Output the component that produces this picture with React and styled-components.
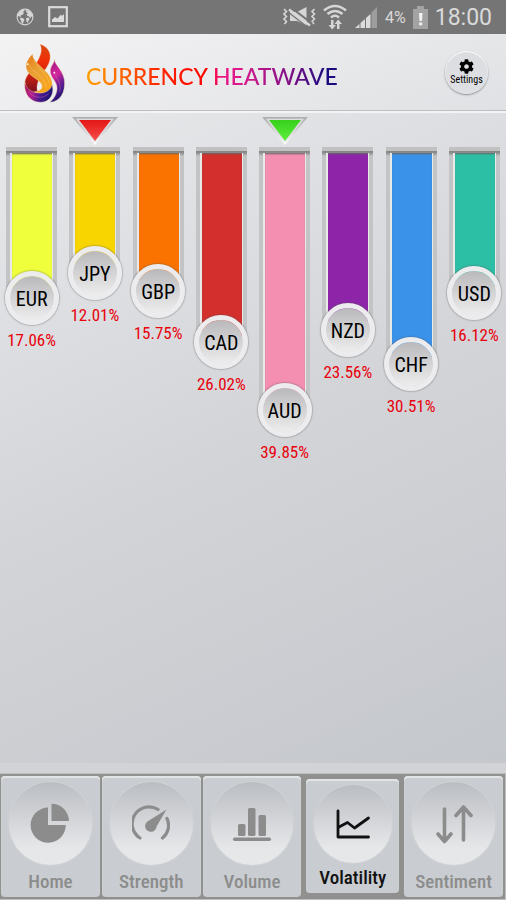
import styled, { createGlobalStyle } from "styled-components";
import { FaCog } from "react-icons/fa";

const PAIRS = [
  { code: "EUR", value: 17.06, color: "#efff3c" },
  { code: "JPY", value: 12.01, color: "#f9d500", marker: "low" },
  { code: "GBP", value: 15.75, color: "#fa7300" },
  { code: "CAD", value: 26.02, color: "#d32f2d" },
  { code: "AUD", value: 39.85, color: "#f48fb1", marker: "high" },
  { code: "NZD", value: 23.56, color: "#8e24a8" },
  { code: "CHF", value: 30.51, color: "#3a92e9" },
  { code: "USD", value: 16.12, color: "#2dbfa6" },
];

const TABS = [
  { name: "Home", Icon: PieIcon },
  { name: "Strength", Icon: GaugeIcon },
  { name: "Volume", Icon: BarsIcon },
  { name: "Volatility", Icon: LineIcon, active: true },
  { name: "Sentiment", Icon: ArrowsIcon },
];

const barHeight = (value) => Math.round(67 + value * 4.92);

const App = () => {
  return (
    <>
      <GlobalStyle />
      <Screen>
        <StatusBar>
          <StatusGroup $gap="14px">
            <GlobeIcon />
            <PhotoIcon />
          </StatusGroup>
          <StatusGroup $gap="7px">
            <MuteIcon />
            <WifiIcon />
            <SignalIcon />
            <Percent>4%</Percent>
            <BatteryIcon />
            <Clock>18:00</Clock>
          </StatusGroup>
        </StatusBar>

        <Header>
          <Logo />
          <Title>CURRENCY HEATWAVE</Title>
          <SettingsButton type="button">
            <FaCog size={15} />
            Settings
          </SettingsButton>
        </Header>

        <Chart>
          {PAIRS.map((pair) => (
            <Column key={pair.code}>
              <MarkerSlot>{pair.marker && <Marker type={pair.marker} />}</MarkerSlot>
              <Track style={{ height: barHeight(pair.value) }}>
                <Fill $color={pair.color} />
              </Track>
              <Knob type="button">{pair.code}</Knob>
              <Value>{pair.value}%</Value>
            </Column>
          ))}
        </Chart>

        <Divider />
        <TabBar>
          {TABS.map(({ name, Icon, active }) => (
            <Tab key={name} type="button" $active={active}>
              <Disc>
                <Icon />
              </Disc>
              {name}
            </Tab>
          ))}
        </TabBar>
      </Screen>
    </>
  );
};

function GlobeIcon() {
  return (
    <svg width="18" height="18" viewBox="0 0 18 18">
      <circle cx="9" cy="9" r="7.9" fill="none" stroke="#d6d6d6" strokeWidth="1.1" />
      <path
        fill="#d6d6d6"
        d="M2 5.5L5 2.5L8 1.5L8.5 3L7 4L8 5.5L6 7L4.5 7.5L5 9L3.5 8.5L1.5 8ZM9.5 2L13 2.5L16 5.5L16.5 9L15 8.5L14.5 10.5L13 8.5L11.5 8L10.5 6.5L12 5L10.5 4.5ZM4.5 9.5L7.5 10.5L8.5 12L7.5 13.5L7 16L5.5 14.5L5 12.5L4 11ZM10 10L12.5 9.5L13.5 11L12.5 13L11.5 15L10.5 13.5Z"
      />
    </svg>
  );
}

function PhotoIcon() {
  return (
    <svg width="20" height="22" viewBox="0 0 20 22">
      <rect x="1.2" y="1.2" width="17.6" height="19" fill="none" stroke="#dadada" strokeWidth="2.2" />
      <path fill="#dadada" d="M4 16V13.500L7 11L9.500 12.500L13 8.500L14 10L16 8V16Z" />
    </svg>
  );
}

function MuteIcon() {
  return (
    <svg width="33" height="22" viewBox="0 0 33 22">
      <g fill="none" stroke="#d6d6d6" strokeWidth="1.6">
        <path d="M1 3L3.500 5.500L1 8L3.500 10.500L1 13L3.500 15.500L1.500 18" />
        <path d="M31.500 3L29 5.500L31.500 8L29 10.500L31.500 13L29 15.500L31 18" />
      </g>
      <path fill="#d6d6d6" d="M7 6H14L23.500 1V19.500L14 15H7Z" />
      <path d="M8 1.500L29 17.500" stroke="#757575" strokeWidth="2.200" />
      <path d="M6 3.500L27 19.500" stroke="#d6d6d6" strokeWidth="2.400" />
      <path d="M5 6L25 21.500" stroke="#757575" strokeWidth="1.200" />
    </svg>
  );
}

function WifiIcon() {
  return (
    <svg width="24" height="26" viewBox="0 0 24 26">
      <g fill="none" stroke="#d6d6d6" strokeWidth="2.600">
        <path d="M1 6.500Q12 -2.500 23 6.500" />
        <path d="M4.500 10Q12 4 19.500 10" />
        <path d="M8 13.500Q12 10 16 13.500" />
      </g>
      <path
        fill="#d6d6d6"
        d="M8 16H10.500V21H13L9.200 25.500L5.500 21H8ZM14 25V20H11.500L15.200 15.500L19 20H16.500V25Z"
      />
    </svg>
  );
}

function SignalIcon() {
  return (
    <svg width="24" height="23" viewBox="0 0 24 23">
      <path fill="#dcdcdc" d="M1 22L5.500 18V22ZM6.500 17L11 13V22H6.500ZM12 12L16.500 8V22H12Z" />
      <path fill="#9d9d9d" d="M17.500 6.500L23 1V22H17.500Z" />
    </svg>
  );
}

function BatteryIcon() {
  return (
    <svg width="15" height="23" viewBox="0 0 15 23">
      <path fill="#a3a3a3" d="M4 0H11V3H15V23H0V3H4Z" />
      <path fill="#f2f2f2" d="M6 7H9.500L9 15H6.500ZM6.200 16.500H9.200V19.200H6.200Z" />
    </svg>
  );
}

function Logo() {
  return (
    <svg width="60" height="66" viewBox="0 0 180 198" aria-hidden="true">
      <defs>
        <linearGradient id="red" x1="0" y1="0" x2="0" y2="1">
          <stop offset="0" stopColor="#d9480e" />
          <stop offset="0.35" stopColor="#f02f08" />
          <stop offset="0.65" stopColor="#c91f10" />
          <stop offset="1" stopColor="#7a1022" />
        </linearGradient>
        <linearGradient id="orange" x1="0" y1="0" x2="0.6" y2="1">
          <stop offset="0" stopColor="#e67817" />
          <stop offset="0.5" stopColor="#e9a235" />
          <stop offset="1" stopColor="#f7a41b" />
        </linearGradient>
        <linearGradient id="bowl" x1="0" y1="0" x2="1" y2="0.3">
          <stop offset="0" stopColor="#a3134f" />
          <stop offset="0.4" stopColor="#b3208f" />
          <stop offset="0.7" stopColor="#4b1990" />
          <stop offset="1" stopColor="#221575" />
        </linearGradient>
        <linearGradient id="side" x1="0" y1="0" x2="0.3" y2="1">
          <stop offset="0" stopColor="#9c167f" />
          <stop offset="0.45" stopColor="#d3269b" />
          <stop offset="0.75" stopColor="#5c1b91" />
          <stop offset="1" stopColor="#221575" />
        </linearGradient>
      </defs>
      <g stroke="#f3d9ae" strokeWidth="1.200">
        <path
          fill="url(#red)"
          d="M75 12C104 22 112 47 101 71C94 87 82 98 76 111C69 125 63 138 68 156C50 162 33 152 30 133C26 112 50 92 62 72C75 52 84 32 75 12Z"
        />
        <path
          fill="url(#bowl)"
          d="M30 127C34 146 47 156 66 158C88 160 106 150 110 130C119 155 110 176 92 184C70 192 44 182 35 162C29 149 28 137 30 127Z"
        />
        <path
          fill="url(#orange)"
          d="M53 42C52 58 69 72 89 91C111 112 118 133 104 148C92 160 74 162 58 155C74 153 82 147 81 137C80 125 60 117 43 101C25 82 34 60 53 42Z"
        />
        <path
          fill="url(#side)"
          d="M118 57C120 77 143 89 148 119C152 157 136 184 105 187C123 170 130 151 124 133C118 117 105 110 106 91C107 76 119 71 118 57Z"
        />
      </g>
      <g fill="none" strokeWidth="2" opacity="0.5">
        <path d="M41 73C48 94 94 112 94 145M57 62C66 82 103 106 103 134" stroke="#ffd38a" />
        <path d="M40 153C53 175 83 178 101 161M117 92C116 108 143 124 134 157" stroke="#e98ac8" />
      </g>
      <circle cx="38" cy="73" r="3" fill="#fff0ca" />
      <circle cx="118" cy="98" r="3" fill="#fbd9f0" />
    </svg>
  );
}

function Marker({ type }) {
  const color = type === "high" ? ["#37d01d", "#5cf03a"] : ["#e31717", "#f74e49"];
  return (
    <svg width="46" height="28" viewBox="0 0 46 28">
      <defs>
        <linearGradient id={`fill-${type}`} x1="0" y1="0" x2="0" y2="1">
          <stop offset="0" stopColor={color[0]} />
          <stop offset="1" stopColor={color[1]} />
        </linearGradient>
        <linearGradient id={`rim-${type}`} x1="0" y1="0" x2="0" y2="1">
          <stop offset="0" stopColor="#aeaeb0" />
          <stop offset="0.5" stopColor="#d5d5d7" />
          <stop offset="1" stopColor="#ffffff" />
        </linearGradient>
      </defs>
      <path fill={`url(#rim-${type})`} d="M0 0H46L23 28Z" />
      <path fill="#dedee0" d="M4 1.700H42L23 25Z" />
      <path fill={`url(#fill-${type})`} d="M7 3H39L23 24Z" />
    </svg>
  );
}

function PieIcon() {
  return (
    <svg width="40" height="40" viewBox="0 0 40 40" fill="currentColor">
      <path d="M18 4.500V22H35.800A17.600 17.600 0 1 1 18 4.500Z" />
      <path d="M21.500 0.800A17.500 17.500 0 0 1 39 18H21.500Z" />
    </svg>
  );
}

function GaugeIcon() {
  return (
    <svg width="38" height="36" viewBox="0 0 38 36">
      <g fill="none" stroke="currentColor" strokeWidth="3.200" strokeLinecap="round">
        <path d="M8 33A16.200 16.200 0 0 1 26 4.500" />
        <path d="M35 13.500A16.200 16.200 0 0 1 30.500 33" />
      </g>
      <path fill="currentColor" d="M34.500 4.500L24.500 21.500A5.700 5.700 0 1 1 15.500 16.500Z" />
    </svg>
  );
}

function BarsIcon() {
  return (
    <svg width="40" height="38" viewBox="0 0 40 38" fill="currentColor">
      <rect x="6" y="20" width="7.500" height="12" rx="1.500" />
      <rect x="16" y="4" width="7.500" height="28" rx="1.500" />
      <rect x="26.500" y="11" width="7.500" height="21" rx="1.500" />
      <rect x="1" y="33.500" width="38" height="3.500" rx="1.700" />
    </svg>
  );
}

function LineIcon() {
  return (
    <svg
      width="36"
      height="32"
      viewBox="0 0 36 32"
      fill="none"
      stroke="currentColor"
      strokeWidth="2.800"
      strokeLinecap="round"
      strokeLinejoin="round"
    >
      <path d="M3 3V29H33.500" />
      <path d="M4 19L12.500 14.500L19.500 20L33.500 10" />
    </svg>
  );
}

function ArrowsIcon() {
  return (
    <svg
      width="38"
      height="40"
      viewBox="0 0 38 40"
      fill="none"
      stroke="currentColor"
      strokeWidth="3.600"
      strokeLinecap="round"
      strokeLinejoin="round"
    >
      <path d="M9.500 5V37M3 30L9.500 37.500L16 30" />
      <path d="M28.500 36V3M21 11.500L28.500 3L36 11.500" />
    </svg>
  );
}

const GlobalStyle = createGlobalStyle`
  * {
    box-sizing: border-box;
  }

  body {
    margin: 0;
  }

  button {
    border: none;
    padding: 0;
    font-family: inherit;
    cursor: pointer;
  }

  svg {
    flex-shrink: 0;
  }
`;

const Screen = styled.div`
  min-height: 100vh;
  display: flex;
  flex-direction: column;
  font-family: "Roboto Condensed", Roboto, sans-serif;
  background: #c6c8cd;
`;

const StatusBar = styled.div`
  height: 34px;
  padding: 0 14px 0 16px;
  display: flex;
  align-items: center;
  justify-content: space-between;
  background: #757575;
  color: #dadada;
  font-family: Roboto, sans-serif;
`;

const StatusGroup = styled.div`
  display: flex;
  align-items: center;
  gap: ${({ $gap }) => $gap};
`;

const Percent = styled.span`
  font-size: 16px;
`;

const Clock = styled.span`
  font-size: 23px;
`;

const Header = styled.header`
  height: 79px;
  padding: 0 18px 0 15px;
  display: flex;
  align-items: center;
  background: linear-gradient(160deg, #f3f3f4, #e0e1e4);
  border-bottom: 2px solid #f4f4f5;
  box-shadow: inset 0 -1px #bebec0;
`;

const Title = styled.h1`
  margin: 6px auto 0 11px;
  font-family: Lato, sans-serif;
  font-size: 23px;
  font-weight: 500;
  line-height: 28px;
  white-space: nowrap;
  color: transparent;
  background: linear-gradient(
    90deg,
    #ffa000,
    #ff2a00 28%,
    #ff0000 48%,
    #ec1586 54%,
    #d81b8c 62%,
    #7a0f85 82%,
    #1a0a80 95%
  );
  background-clip: text;
  -webkit-background-clip: text;
`;

const SettingsButton = styled.button`
  width: 43px;
  height: 43px;
  display: flex;
  flex-direction: column;
  align-items: center;
  justify-content: center;
  border-radius: 50%;
  background: linear-gradient(#dcdde0, #dfe0e3);
  box-shadow:
    0 1px 2px #8a8a8c,
    inset 0 1px 1px #ffffff;
  color: #000;
  font-size: 10px;
  line-height: 12px;
`;

const Chart = styled.main`
  flex: 1;
  padding-top: 4px;
  display: flex;
  align-items: flex-start;
  background: linear-gradient(155deg, #e8e9eb, #d3d4d8 50%, #c4c7cc);
`;

const Column = styled.div`
  flex: 1;
  display: flex;
  flex-direction: column;
  align-items: center;
`;

const MarkerSlot = styled.div`
  height: 30px;
`;

const Track = styled.div`
  width: 51px;
  padding: 2px 4px 0;
  display: flex;
  border-top: 4px solid #c1c1c2;
  background: linear-gradient(#858585, #8f8f8f 2px, #c3c4c5 5px);
`;

const Fill = styled.div`
  flex: 1;
  border: solid #e9e9ea;
  border-width: 0 1px 0 2px;
  background: ${({ $color }) => $color};
  box-shadow: inset 0 2px 2px -1px #666666;
`;

const Knob = styled.button`
  width: 54px;
  height: 54px;
  margin-top: -27px;
  padding-top: 2px;
  border: 5px solid #ececee;
  border-radius: 50%;
  background: linear-gradient(#b9b9bb, #ededee) padding-box;
  box-shadow: 0 0 2px #555555;
  color: #000;
  font-size: 20px;
  line-height: 22px;
`;

const Value = styled.span`
  margin-top: 5px;
  color: #e8000b;
  font-size: 17px;
  line-height: 20px;
`;

const Divider = styled.div`
  height: 10px;
  background: #d2d3d7;
`;

const TabBar = styled.nav`
  height: 127px;
  padding: 2px 2px 2px 1px;
  display: grid;
  grid-template-columns: repeat(5, minmax(0, 1fr));
  gap: 2px;
  background: #90918f;
  border: solid #bdbebf;
  border-width: 1px 1px 1px 0;
`;

const Tab = styled.button`
  margin: ${({ $active }) => ($active ? "3px 3px 4px" : "0")};
  padding: 6px 0 4px;
  display: flex;
  flex-direction: column;
  align-items: center;
  justify-content: space-between;
  border-radius: 4px;
  background: #c9ccd0;
  box-shadow: inset 0 2px 1px #e4e5e7;
  color: ${({ $active }) => ($active ? "#111111" : "#8c8c8c")};
  font-size: 19px;
  font-weight: 500;
  line-height: 22px;
`;

const Disc = styled.span`
  width: 84%;
  max-width: 84px;
  aspect-ratio: 1;
  display: flex;
  align-items: center;
  justify-content: center;
  border-radius: 50%;
  background: linear-gradient(#babdc2, #e6e7e9 80%);
  box-shadow: 0 0 2px #dfe0e2;
`;

export default App;
